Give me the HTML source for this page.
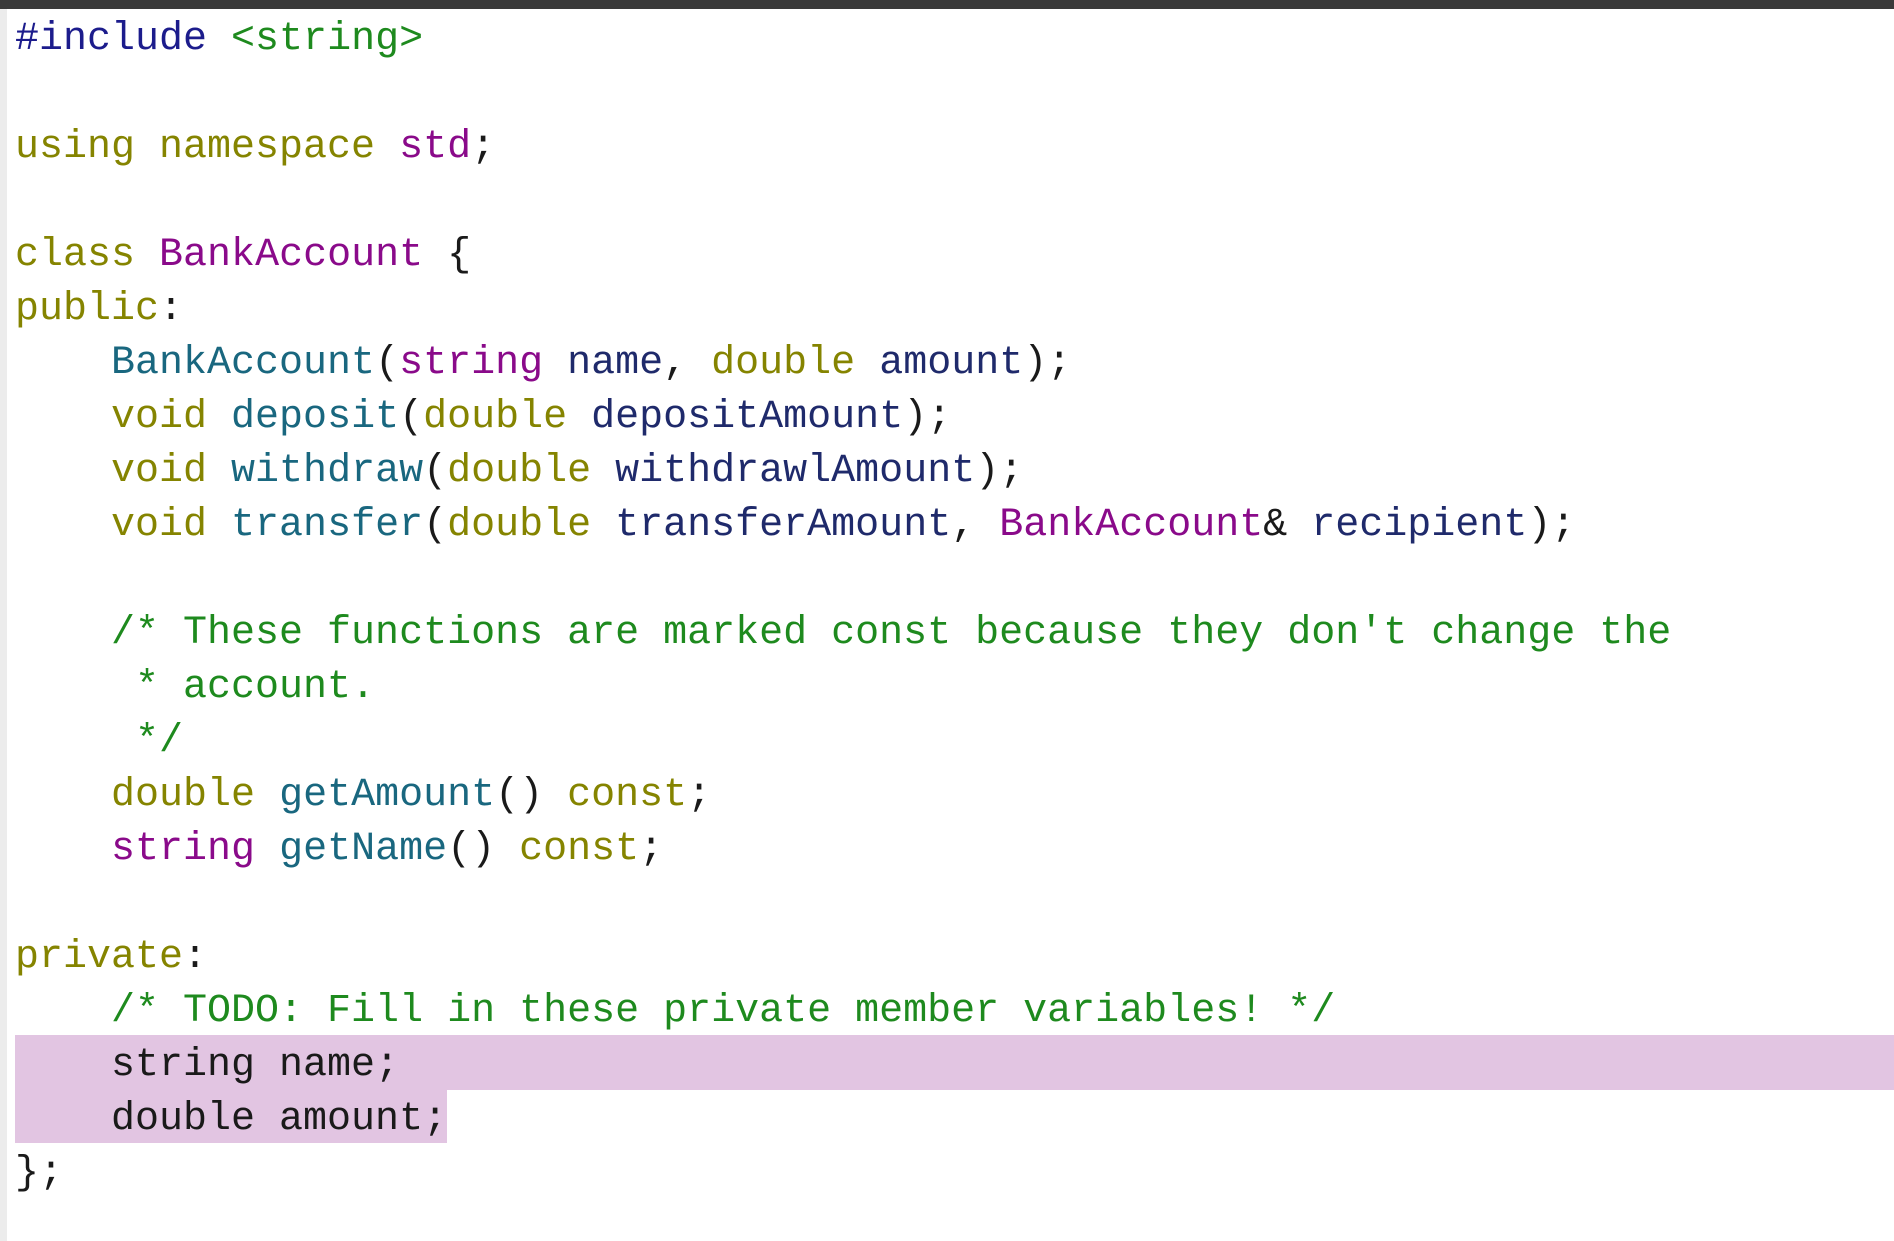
<!DOCTYPE html>
<html><head><meta charset="utf-8"><style>
html,body{margin:0;padding:0;width:1894px;height:1241px;overflow:hidden;background:#fff;}
#top{position:absolute;left:0;top:0;width:1894px;height:9px;background:#3a3a3a;}
#gut{position:absolute;left:0;top:9px;width:7px;height:1232px;background:#ececec;}
.hl{position:absolute;background:#e2c5e2;}
pre{position:absolute;left:15px;top:13px;margin:0;font-family:"Liberation Mono","DejaVu Sans Mono",monospace;font-size:40px;line-height:54px;color:#1a1a1a;}
.pp{color:#1c1c8c}.st{color:#1e8a1e}.kw{color:#858400}.ty{color:#8a0a8a}.fn{color:#19677f}.id{color:#1f2a6b}.cm{color:#1e8a1e}
</style></head><body>
<div id="top"></div><div id="gut"></div>
<div class="hl" style="left:15px;top:1035px;width:1879px;height:55px;"></div>
<div class="hl" style="left:15px;top:1089px;width:432px;height:54px;"></div>
<pre><span class="pp">#include</span> <span class="st">&lt;string&gt;</span>

<span class="kw">using namespace</span> <span class="ty">std</span>;

<span class="kw">class</span> <span class="ty">BankAccount</span> {
<span class="kw">public</span>:
    <span class="fn">BankAccount</span>(<span class="ty">string</span> <span class="id">name</span>, <span class="kw">double</span> <span class="id">amount</span>);
    <span class="kw">void</span> <span class="fn">deposit</span>(<span class="kw">double</span> <span class="id">depositAmount</span>);
    <span class="kw">void</span> <span class="fn">withdraw</span>(<span class="kw">double</span> <span class="id">withdrawlAmount</span>);
    <span class="kw">void</span> <span class="fn">transfer</span>(<span class="kw">double</span> <span class="id">transferAmount</span>, <span class="ty">BankAccount</span>&amp; <span class="id">recipient</span>);

    <span class="cm">/* These functions are marked const because they don't change the
     * account.
     */</span>
    <span class="kw">double</span> <span class="fn">getAmount</span>() <span class="kw">const</span>;
    <span class="ty">string</span> <span class="fn">getName</span>() <span class="kw">const</span>;

<span class="kw">private</span>:
    <span class="cm">/* TODO: Fill in these private member variables! */</span>
    string name;
    double amount;
};
</pre>
</body></html>
